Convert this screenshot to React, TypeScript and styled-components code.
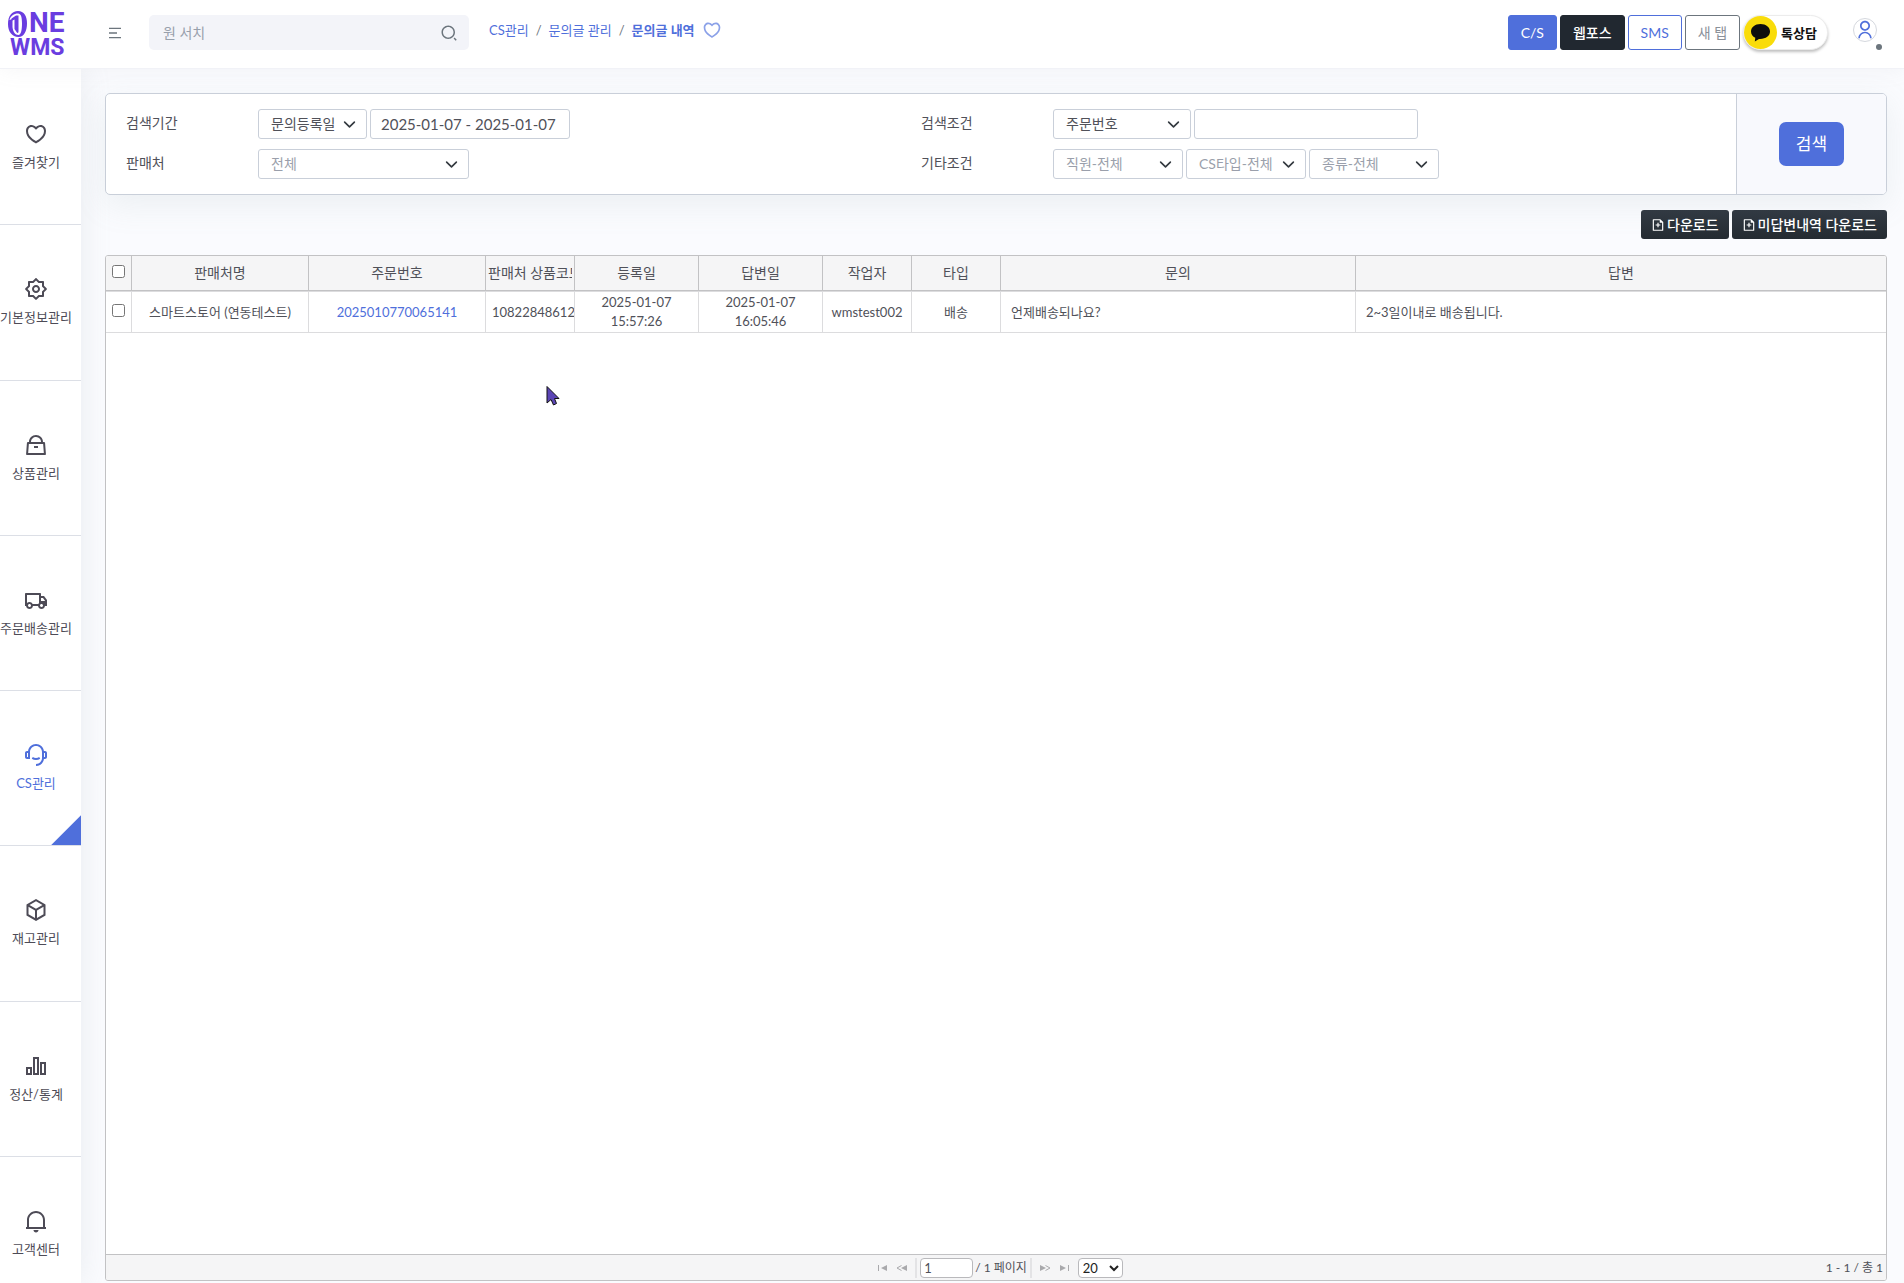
import React from 'react';
import styled, { createGlobalStyle, css } from 'styled-components';
import {
  RiBarChart2Line,
  RiBox3Line,
  RiCustomerService2Line,
  RiFileAddLine,
  RiHandbagLine,
  RiHeart3Line,
  RiMenu2Line,
  RiNotification2Line,
  RiSearch2Line,
  RiSettings2Line,
  RiTruckLine,
  RiUserLine,
} from 'react-icons/ri';

const color = {
  primary: '#4f6fdb',
  dark: '#212830',
  text: '#505159',
  muted: '#9a9fab',
  border: '#c9cfd9',
  grid: '#c2c2c4',
  gridLight: '#dcdcde',
  page: '#fafbfe',
};

const GlobalStyle = createGlobalStyle`
  *, *::before, *::after { box-sizing: border-box; }
  body {
    margin: 0;
    background: ${color.page};
    color: ${color.text};
    font: 14px/20px Lato, "Noto Sans CJK KR", sans-serif;
  }
  button, input, select { font: inherit; color: inherit; }
  a { color: ${color.primary}; text-decoration: none; }
`;

const Page = styled.div`
  display: flex;
  flex-direction: column;
  height: 100vh;
  overflow: hidden;
`;

/* ---------- Top bar ---------- */

const TopBar = styled.header`
  display: flex;
  align-items: flex-start;
  height: 69px;
  flex: none;
  padding: 15px 27px 0 6px;
  background: #fff;
  border-bottom: 1px solid #f1f2f7;
  box-shadow: 0 0 20px rgba(154, 161, 171, 0.1);
  z-index: 2;
`;

const LogoLink = styled.a`
  display: block;
  width: 101px;
  margin-top: -5px;
  svg { display: block; overflow: visible; }
`;

const IconButton = styled.button`
  display: flex;
  align-items: center;
  height: 36px;
  padding: 0;
  border: 0;
  background: none;
  color: #6c757d;
  font-size: 16px;
`;

const SearchBox = styled.form`
  display: flex;
  align-items: center;
  width: 320px;
  height: 35px;
  margin-left: 26px;
  padding: 0 11px 0 14px;
  border-radius: 5px;
  background: #f3f4f9;
  color: #6c757d;
  svg { font-size: 18px; }
`;

const SearchInput = styled.input`
  flex: 1;
  min-width: 0;
  padding: 0;
  border: 0;
  outline: 0;
  background: none;
  &::placeholder { color: #98a0ac; opacity: 1; }
`;

const Breadcrumb = styled.nav`
  display: flex;
  align-items: center;
  gap: 7px;
  height: 30px;
  margin-left: 20px;
  font-size: 13px;
  color: #6c757d;
  strong { font-weight: 700; }
  svg { display: block; }
`;

const FavButton = styled(IconButton)`
  height: 30px;
  color: #8ba1e8;
  font-size: 20px;
`;

const Actions = styled.div`
  display: flex;
  align-items: center;
  gap: 3px;
  margin-left: auto;
`;

type Tone = 'primary' | 'dark' | 'outlinePrimary' | 'outlineGray';

const tones = {
  primary: css`background: ${color.primary}; border-color: ${color.primary}; color: #fff;`,
  dark: css`background: ${color.dark}; border-color: ${color.dark}; color: #fff; font-weight: 500;`,
  outlinePrimary: css`background: #fff; border-color: ${color.primary}; color: ${color.primary};`,
  outlineGray: css`background: #fff; border-color: #6c757d; color: #8a9099;`,
};

const TopButton = styled.button<{ $tone: Tone }>`
  height: 35px;
  padding: 0 12px;
  border: 1px solid;
  border-radius: 3px;
  white-space: nowrap;
  ${p => tones[p.$tone]}
`;

const KakaoButton = styled.button`
  display: flex;
  align-items: center;
  gap: 4px;
  height: 35px;
  padding: 0 10px 0 0;
  border: 1px solid #ececec;
  border-radius: 18px;
  background: #fff;
  box-shadow: 0 2px 3px rgba(0, 0, 0, 0.25);
  color: #111;
  font-size: 13px;
  font-weight: 700;
`;

const ProfileButton = styled.button`
  position: relative;
  display: grid;
  place-items: center;
  width: 24px;
  height: 24px;
  margin: 0 0 5px 22px;
  padding: 0;
  border: 1px solid #d5d8de;
  border-radius: 50%;
  background: #fff;
  color: ${color.primary};
  font-size: 20px;
  svg { flex: none; }
  &::after {
    content: '';
    position: absolute;
    right: -6px;
    bottom: -9px;
    width: 6px;
    height: 6px;
    border-radius: 50%;
    background: #6c757d;
  }
`;

/* ---------- Side navigation ---------- */

const Body = styled.div`
  display: flex;
  flex: 1;
  min-height: 0;
`;

const SidebarShadow = styled.div`
  display: flex;
  flex: none;
  box-shadow: 0 0 30px rgba(154, 165, 171, 0.18);
  z-index: 1;
`;

const Sidebar = styled.nav`
  display: flex;
  flex-direction: column;
  width: 81px;
  flex: none;
  padding-top: 1px;
  overflow: hidden;
  background: #fff;
`;

const NavItem = styled.a<{ $active?: boolean }>`
  position: relative;
  display: flex;
  flex: 0 0 12.8%;
  flex-direction: column;
  align-items: center;
  justify-content: center;
  gap: 6px;
  padding-right: 9px;
  border-bottom: 1px solid #dcdfe6;
  color: ${p => (p.$active ? color.primary : '#4d4b56')};
  font-size: 13px;
  white-space: nowrap;
  svg { font-size: 24px; }
  ${p =>
    p.$active &&
    css`
      &::after {
        content: '';
        position: absolute;
        right: 0;
        bottom: 0;
        width: 30px;
        height: 30px;
        background: ${color.primary};
        clip-path: polygon(100% 0, 100% 100%, 0 100%);
      }
    `}
`;

/* ---------- Search filter ---------- */

const Main = styled.main`
  display: flex;
  flex: 1;
  flex-direction: column;
  min-width: 0;
  padding: 24px 17px 2px 24px;
`;

const FilterCard = styled.form`
  display: flex;
  flex: none;
  border: 1px solid ${color.border};
  border-radius: 5px;
  background: #fff;
  box-shadow: 0 10px 32px rgba(140, 160, 165, 0.13);
`;

const FilterGrid = styled.div`
  display: grid;
  flex: 1;
  grid-template-columns: 1fr 1fr;
  gap: 10px 0;
  padding: 15px 20px;
`;

const Field = styled.div`
  display: flex;
  gap: 3px;
`;

const FieldLabel = styled.label`
  width: 129px;
  line-height: 28px;
`;

const chevron =
  "url(\"data:image/svg+xml,%3Csvg xmlns='http://www.w3.org/2000/svg' viewBox='0 0 16 16'%3E%3Cpath fill='none' stroke='%23343a40' stroke-linecap='round' stroke-linejoin='round' stroke-width='2' d='m2 5 6 6 6-6'/%3E%3C/svg%3E\")";

const Select = styled.select<{ $width: number; $muted?: boolean }>`
  appearance: none;
  width: ${p => p.$width}px;
  height: 30px;
  padding: 0 28px 0 12px;
  border: 1px solid ${color.border};
  border-radius: 3px;
  background: #fff ${chevron} no-repeat right 10px center / 13px 13px;
  color: ${p => (p.$muted ? color.muted : color.text)};
`;

const TextInput = styled.input<{ $width: number }>`
  width: ${p => p.$width}px;
  height: 30px;
  padding: 0 10px;
  border: 1px solid ${color.border};
  border-radius: 3px;
  background: #fff;
  font-size: 15px;
`;

const SubmitArea = styled.div`
  display: grid;
  place-items: center;
  width: 150px;
  border-left: 1px solid ${color.border};
  border-radius: 0 4px 4px 0;
  background: #f8f9fd;
`;

const SubmitButton = styled.button`
  height: 44px;
  padding: 0 17px;
  border: 0;
  border-radius: 7px;
  background: ${color.primary};
  color: #fff;
  font-size: 17px;
`;

const Toolbar = styled.div`
  display: flex;
  flex: none;
  justify-content: flex-end;
  gap: 3px;
  padding: 15px 0 16px;
`;

const DownloadButton = styled.button`
  display: flex;
  align-items: center;
  gap: 2px;
  height: 29px;
  padding: 0 10px;
  border: 0;
  border-radius: 3px;
  background: linear-gradient(#323a43, #242b32);
  color: #fff;
  font-weight: 500;
  svg { font-size: 14px; }
`;

/* ---------- Result grid ---------- */

const GridPanel = styled.section`
  display: flex;
  flex: 1;
  flex-direction: column;
  min-height: 0;
  border: 1px solid ${color.grid};
  border-radius: 3px;
  background: #fff;
  overflow: hidden;
`;

const GridBody = styled.div`
  flex: 1;
  overflow: hidden;
`;

const Table = styled.table`
  width: 100%;
  table-layout: fixed;
  border-collapse: separate;
  border-spacing: 0;
  input { display: block; margin: 0 auto 3px; }
`;

const HeadCell = styled.th`
  height: 35px;
  padding: 0 2px;
  border-right: 1px solid ${color.grid};
  border-bottom: 1px solid ${color.grid};
  background: #f5f5f6;
  font-weight: 400;
  overflow: hidden;
  white-space: nowrap;
  &:last-child { border-right: 0; }
`;

const HeadText = styled.div`
  overflow: hidden;
`;

const Cell = styled.td<{ $align?: 'left' | 'center'; $pad?: number }>`
  height: 42px;
  padding: 0 0 0 ${p => p.$pad || 0}px;
  border-top: 1px solid ${color.gridLight};
  border-right: 1px solid ${color.gridLight};
  border-bottom: 1px solid ${color.gridLight};
  font-size: 13px;
  line-height: 19px;
  text-align: ${p => p.$align || 'center'};
  white-space: nowrap;
  overflow: hidden;
  &:last-child { border-right: 0; }
`;

const Pager = styled.footer`
  display: grid;
  grid-template-columns: 1fr auto 1fr;
  align-items: center;
  height: 26px;
  padding: 0 3px;
  border-top: 1px solid ${color.grid};
  background: #f5f5f6;
  font-size: 12px;
`;

const PagerControls = styled.div`
  display: flex;
  grid-column: 2;
  align-items: center;
  gap: 8px;
  padding-left: 8px;
`;

const PagerButton = styled.button`
  display: flex;
  padding: 0;
  border: 0;
  background: none;
  color: #a9a9ac;
`;

const PageGroup = styled.label`
  display: flex;
  align-items: center;
  gap: 2px;
  padding: 0 3px;
  border: solid #e3e3e5;
  border-width: 0 2px;
  line-height: 18px;
`;

const PageInput = styled.input`
  width: 53px;
  height: 20px;
  padding: 0 3px;
  border: 1px solid #b9b9bc;
  border-radius: 4px;
  background: #fff;
  font-size: 13px;
`;

const PageSize = styled.select`
  width: 45px;
  height: 20px;
  padding: 0;
  border: 1px solid #b9b9bc;
  border-radius: 4px;
  background: #fff;
  color: #222;
  font-size: 13px;
`;

const PagerSummary = styled.span`
  justify-self: end;
`;

const Pointer = styled.svg`
  position: fixed;
  left: 546px;
  top: 385px;
  z-index: 5;
  pointer-events: none;
`;

/* ---------- Drawings ---------- */

const Logo = () => (
  <svg width="60" height="48" viewBox="0 0 60 48" role="img" aria-label="ONE WMS" fill="#6a3de0">
    <path
      fillRule="evenodd"
      d="M12 1C18 1 21 6 21 13.500C21 21 18 27 12.500 27C6 27 2 21.500 2 14C2 6 6 1 12 1ZM12 3.500C8 3.500 4.500 6 3.500 10L6.500 9V17C7 21.500 9 25 12.500 25C15 25 16 20 16 13.500C16 7 15 3.500 12 3.500Z"
    />
    <path d="M5.500 8.500L10 5.500H12.500V21.500C12.500 23 11.500 23.500 10.500 22L8.500 19V9.500L5.500 11Z" />
    <text x="23" y="22" fontFamily="Roboto" fontWeight="700" fontSize="28">NE</text>
    <text x="4" y="45" fontFamily="Roboto" fontWeight="700" fontSize="23">WMS</text>
  </svg>
);

const TalkIcon = () => (
  <svg width="33" height="33" viewBox="0 0 33 33" aria-hidden="true">
    <circle cx="16.500" cy="16.500" r="16.500" fill="#f9dc0a" />
    <path
      fill="#0d0d0d"
      d="M16.500 8C11 8 7 11.300 7 15.500C7 18.200 8.700 20.500 11.300 21.800L10.800 25.500L15 22.900C21.500 23.300 26 20 26 15.500C26 11.300 22 8 16.500 8Z"
    />
  </svg>
);

const PagerIcon = ({ kind }: { kind: 'first' | 'prev' | 'next' | 'last' }) => {
  const edge = kind === 'first' || kind === 'last';
  const flip = kind === 'next' || kind === 'last';
  return (
    <svg width="11" height="8" viewBox="0 0 11 8" aria-hidden="true">
      <g transform={flip ? 'matrix(-1 0 0 1 11 0)' : undefined}>
        {edge ? (
          <path fill="currentColor" d="M1 1H2V7H1ZM10 1V7L4 4Z" />
        ) : (
          <>
            <path fill="currentColor" d="M11 1V7L5 4Z" />
            <path fill="none" stroke="currentColor" d="M5.500 1.500L1 4L5.500 6.500" />
          </>
        )}
      </g>
    </svg>
  );
};

/* ---------- Data ---------- */

const menu = [
  { label: '즐겨찾기', Icon: RiHeart3Line },
  { label: '기본정보관리', Icon: RiSettings2Line },
  { label: '상품관리', Icon: RiHandbagLine },
  { label: '주문배송관리', Icon: RiTruckLine },
  { label: 'CS관리', Icon: RiCustomerService2Line, active: true },
  { label: '재고관리', Icon: RiBox3Line },
  { label: '정산/통계', Icon: RiBarChart2Line },
  { label: '고객센터', Icon: RiNotification2Line },
];

const columns: { title: string; width?: number }[] = [
  { title: '판매처명', width: 177 },
  { title: '주문번호', width: 177 },
  { title: '판매처 상품코드', width: 89 },
  { title: '등록일', width: 124 },
  { title: '답변일', width: 124 },
  { title: '작업자', width: 89 },
  { title: '타입', width: 89 },
  { title: '문의', width: 355 },
  { title: '답변' },
];

export default function App() {
  return (
    <Page>
      <GlobalStyle />
      <TopBar>
        <LogoLink href="#home"><Logo /></LogoLink>
        <IconButton type="button" aria-label="메뉴"><RiMenu2Line /></IconButton>
        <SearchBox>
          <SearchInput type="text" placeholder="원 서치" aria-label="원 서치" />
          <RiSearch2Line />
        </SearchBox>
        <Breadcrumb>
          <a href="#cs">CS관리</a>
          <span>/</span>
          <a href="#inquiry">문의글 관리</a>
          <span>/</span>
          <a href="#list"><strong>문의글 내역</strong></a>
          <FavButton type="button" aria-label="즐겨찾기"><RiHeart3Line /></FavButton>
        </Breadcrumb>
        <Actions>
          <TopButton type="button" $tone="primary">C/S</TopButton>
          <TopButton type="button" $tone="dark">웹포스</TopButton>
          <TopButton type="button" $tone="outlinePrimary">SMS</TopButton>
          <TopButton type="button" $tone="outlineGray">새 탭</TopButton>
          <KakaoButton type="button"><TalkIcon />톡상담</KakaoButton>
          <ProfileButton type="button" aria-label="프로필"><RiUserLine /></ProfileButton>
        </Actions>
      </TopBar>

      <Body>
        <SidebarShadow>
          <Sidebar>
            {menu.map(({ label, Icon, active }) => (
              <NavItem key={label} href="#menu" $active={active}>
                <Icon />
                {label}
              </NavItem>
            ))}
          </Sidebar>
        </SidebarShadow>

        <Main>
          <FilterCard>
            <FilterGrid>
              <Field>
                <FieldLabel htmlFor="period">검색기간</FieldLabel>
                <Select id="period" $width={109}><option>문의등록일</option></Select>
                <TextInput type="text" $width={200} aria-label="기간" defaultValue="2025-01-07 - 2025-01-07" />
              </Field>
              <Field>
                <FieldLabel htmlFor="condition">검색조건</FieldLabel>
                <Select id="condition" $width={138}><option>주문번호</option></Select>
                <TextInput type="text" $width={224} aria-label="검색어" />
              </Field>
              <Field>
                <FieldLabel htmlFor="seller">판매처</FieldLabel>
                <Select id="seller" $width={211} $muted><option>전체</option></Select>
              </Field>
              <Field>
                <FieldLabel htmlFor="staff">기타조건</FieldLabel>
                <Select id="staff" $width={130} $muted><option>직원-전체</option></Select>
                <Select $width={120} $muted aria-label="CS타입"><option>CS타입-전체</option></Select>
                <Select $width={130} $muted aria-label="종류"><option>종류-전체</option></Select>
              </Field>
            </FilterGrid>
            <SubmitArea>
              <SubmitButton type="button">검색</SubmitButton>
            </SubmitArea>
          </FilterCard>

          <Toolbar>
            <DownloadButton type="button"><RiFileAddLine />다운로드</DownloadButton>
            <DownloadButton type="button"><RiFileAddLine />미답변내역 다운로드</DownloadButton>
          </Toolbar>

          <GridPanel>
            <GridBody>
              <Table>
                <colgroup>
                  <col width={26} />
                  {columns.map(c => <col key={c.title} width={c.width} />)}
                </colgroup>
                <thead>
                  <tr>
                    <HeadCell><input type="checkbox" aria-label="전체 선택" /></HeadCell>
                    {columns.map(c => (
                      <HeadCell key={c.title}><HeadText>{c.title}</HeadText></HeadCell>
                    ))}
                  </tr>
                </thead>
                <tbody>
                  <tr>
                    <Cell><input type="checkbox" aria-label="행 선택" /></Cell>
                    <Cell>스마트스토어 (연동테스트)</Cell>
                    <Cell><a href="#order">2025010770065141</a></Cell>
                    <Cell $align="left" $pad={6}>10822848612</Cell>
                    <Cell>2025-01-07<br />15:57:26</Cell>
                    <Cell>2025-01-07<br />16:05:46</Cell>
                    <Cell>wmstest002</Cell>
                    <Cell>배송</Cell>
                    <Cell $align="left" $pad={10}>언제배송되나요?</Cell>
                    <Cell $align="left" $pad={10}>2~3일이내로 배송됩니다.</Cell>
                  </tr>
                </tbody>
              </Table>
            </GridBody>
            <Pager>
              <PagerControls>
                <PagerButton type="button" aria-label="처음"><PagerIcon kind="first" /></PagerButton>
                <PagerButton type="button" aria-label="이전"><PagerIcon kind="prev" /></PagerButton>
                <PageGroup>
                  <PageInput type="text" defaultValue="1" />
                  / 1 페이지
                </PageGroup>
                <PagerButton type="button" aria-label="다음"><PagerIcon kind="next" /></PagerButton>
                <PagerButton type="button" aria-label="마지막"><PagerIcon kind="last" /></PagerButton>
                <PageSize aria-label="페이지 크기"><option>20</option></PageSize>
              </PagerControls>
              <PagerSummary>1 - 1 / 총 1</PagerSummary>
            </Pager>
          </GridPanel>
        </Main>
      </Body>

      <Pointer width="14" height="22" viewBox="0 0 14 22" aria-hidden="true">
        <path d="M1 1.500V18L5 14.500L7.500 20L10.500 18.500L8.500 13.500H13Z" fill="#5b45b5" stroke="#111" />
      </Pointer>
    </Page>
  );
}
